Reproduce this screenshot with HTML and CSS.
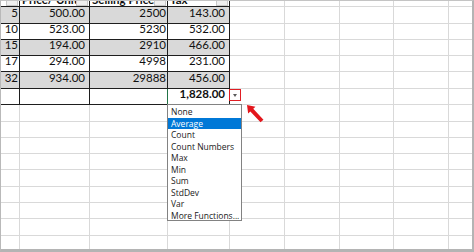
FILE: index.html
```html
<!DOCTYPE html>
<html>
<head>
<meta charset="utf-8">
<link rel="stylesheet" href="styles.css">
</head>
<body>
<div class="sheet">
  <div class="grid">
    <!-- header row -->
    <div class="c t h"><span class="fb"></span></div>
    <div class="c t h"><span class="ht">Price/ Unit</span><span class="fb"></span></div>
    <div class="c t h"><span class="ht">Selling Price</span><span class="fb"></span></div>
    <div class="c t h"><span class="ht">Tax</span><span class="fb"></span></div>
    <div class="c"></div><div class="c"></div><div class="c"></div><div class="c"></div><div class="c e"></div>

    <div class="c t s n i">5</div><div class="c t s n">500.00</div><div class="c t s n i">2500</div><div class="c t s n">143.00</div>
    <div class="c"></div><div class="c"></div><div class="c"></div><div class="c"></div><div class="c e"></div>

    <div class="c t n i">10</div><div class="c t n">523.00</div><div class="c t n i">5230</div><div class="c t n">532.00</div>
    <div class="c"></div><div class="c"></div><div class="c"></div><div class="c"></div><div class="c e"></div>

    <div class="c t s n i">15</div><div class="c t s n">194.00</div><div class="c t s n i">2910</div><div class="c t s n">466.00</div>
    <div class="c"></div><div class="c"></div><div class="c"></div><div class="c"></div><div class="c e"></div>

    <div class="c t n i">17</div><div class="c t n">294.00</div><div class="c t n i">4998</div><div class="c t n">231.00</div>
    <div class="c"></div><div class="c"></div><div class="c"></div><div class="c"></div><div class="c e"></div>

    <div class="c t s n i">32</div><div class="c t s n">934.00</div><div class="c t s n i">29888</div><div class="c t s n">456.00</div>
    <div class="c"></div><div class="c"></div><div class="c"></div><div class="c"></div><div class="c e"></div>

    <div class="c t"></div><div class="c t"></div><div class="c t sel"></div><div class="c t n b">1,828.00</div>
    <div class="c"></div><div class="c"></div><div class="c"></div><div class="c"></div><div class="c e"></div>

    <div class="c"></div><div class="c"></div><div class="c"></div><div class="c"></div><div class="c"></div><div class="c"></div><div class="c"></div><div class="c"></div><div class="c e"></div>
    <div class="c"></div><div class="c"></div><div class="c"></div><div class="c"></div><div class="c"></div><div class="c"></div><div class="c"></div><div class="c"></div><div class="c e"></div>
    <div class="c"></div><div class="c"></div><div class="c"></div><div class="c"></div><div class="c"></div><div class="c"></div><div class="c"></div><div class="c"></div><div class="c e"></div>
    <div class="c"></div><div class="c"></div><div class="c"></div><div class="c"></div><div class="c"></div><div class="c"></div><div class="c"></div><div class="c"></div><div class="c e"></div>
    <div class="c"></div><div class="c"></div><div class="c"></div><div class="c"></div><div class="c"></div><div class="c"></div><div class="c"></div><div class="c"></div><div class="c e"></div>
    <div class="c"></div><div class="c"></div><div class="c"></div><div class="c"></div><div class="c"></div><div class="c"></div><div class="c"></div><div class="c"></div><div class="c e"></div>
    <div class="c"></div><div class="c"></div><div class="c"></div><div class="c"></div><div class="c"></div><div class="c"></div><div class="c"></div><div class="c"></div><div class="c e"></div>
    <div class="c"></div><div class="c"></div><div class="c"></div><div class="c"></div><div class="c"></div><div class="c"></div><div class="c"></div><div class="c"></div><div class="c e"></div>
    <div class="c l"></div><div class="c l"></div><div class="c l"></div><div class="c l"></div><div class="c l"></div><div class="c l"></div><div class="c l"></div><div class="c l"></div><div class="c l e"></div>
  </div>

  <div class="ddbtn"><span class="tri"></span></div>

  <svg class="arrow" width="22" height="22" viewBox="0 0 22 22">
    <polygon points="3,3 11.44,4.68 9.25,6.73 19.46,17.63 16.54,20.37 6.33,9.47 4.14,11.52" fill="#e3161c"/>
  </svg>

  <ul class="menu">
    <li>None</li>
    <li class="on">Average</li>
    <li>Count</li>
    <li>Count Numbers</li>
    <li>Max</li>
    <li>Min</li>
    <li>Sum</li>
    <li>StdDev</li>
    <li>Var</li>
    <li>More Functions...</li>
  </ul>
</div>
</body>
</html>
```

FILE: styles.css
```css
html, body {
  margin: 0;
  padding: 0;
  background: #ffffff;
}

.sheet {
  position: relative;
  width: 474px;
  height: 252px;
  box-sizing: border-box;
  border-left: 1px solid #b9b9b9;
  border-top: 1px solid #c4c4c4;
  border-right: 2px solid #b4b4b4;
  border-bottom: 3px solid #b4b4b4;
  overflow: hidden;
  font-family: Lato, "Open Sans", sans-serif;
  color: #111;
}

.grid {
  display: grid;
  grid-template-columns: 19px 70px 78px 62px 55px 55px 54px 55px 23px;
  grid-template-rows: 6px 17px 16px 16px 16px 17px 16px 17px 16px 16px 16px 17px 16px 16px 17px 13px;
}

.c {
  box-sizing: border-box;
  border-right: 1px solid #d9d9d9;
  border-bottom: 1px solid #d9d9d9;
  display: flex;
  align-items: flex-end;
  justify-content: flex-end;
  font-size: 11.5px;
  line-height: 14px;
  white-space: nowrap;
  overflow: hidden;
}

.e { border-right: none; }
.l { border-bottom: none; }

.t {
  border-right-color: #1e1e1e;
  border-bottom-color: #1e1e1e;
}

.s { background: #d9d9d9; }

.n { padding: 0 4px 3px 0; }
.n.i { padding-right: 1px; }
.b { font-weight: bold; }

.sel { border-right-color: #217346; }

.h {
  position: relative;
  justify-content: flex-start;
  padding-left: 2px;
  overflow: hidden;
}

.ht {
  font-weight: bold;
  margin-bottom: -1px;
}

.fb {
  position: absolute;
  right: 1px;
  bottom: 0;
  width: 12px;
  height: 14px;
  box-sizing: border-box;
  background: #efefef;
  border: 1px solid #c8c8c8;
}

.ddbtn {
  position: absolute;
  left: 228px;
  top: 88px;
  width: 12px;
  height: 12px;
  box-sizing: border-box;
  border: 1px solid #e01e24;
  background: #fff;
  display: flex;
  align-items: center;
  justify-content: center;
}

.tri {
  width: 0;
  height: 0;
  border-left: 2.5px solid transparent;
  border-right: 2.5px solid transparent;
  border-top: 3px solid #5a5a5a;
}

.arrow {
  position: absolute;
  left: 243px;
  top: 101px;
}

.menu {
  position: absolute;
  left: 166px;
  top: 103px;
  width: 75px;
  height: 117px;
  box-sizing: border-box;
  margin: 0;
  padding: 1px 0 0;
  list-style: none;
  background: #fff;
  border: 1px solid #828282;
  font-family: "Open Sans", "Noto Sans", sans-serif;
  font-size: 8.5px;
  line-height: 11.5px;
  color: #1a1a1a;
}

.menu li {
  height: 11.5px;
  padding-left: 3px;
  white-space: nowrap;
}

.menu li.on {
  background: #0078d7;
  color: #fff;
}
```
